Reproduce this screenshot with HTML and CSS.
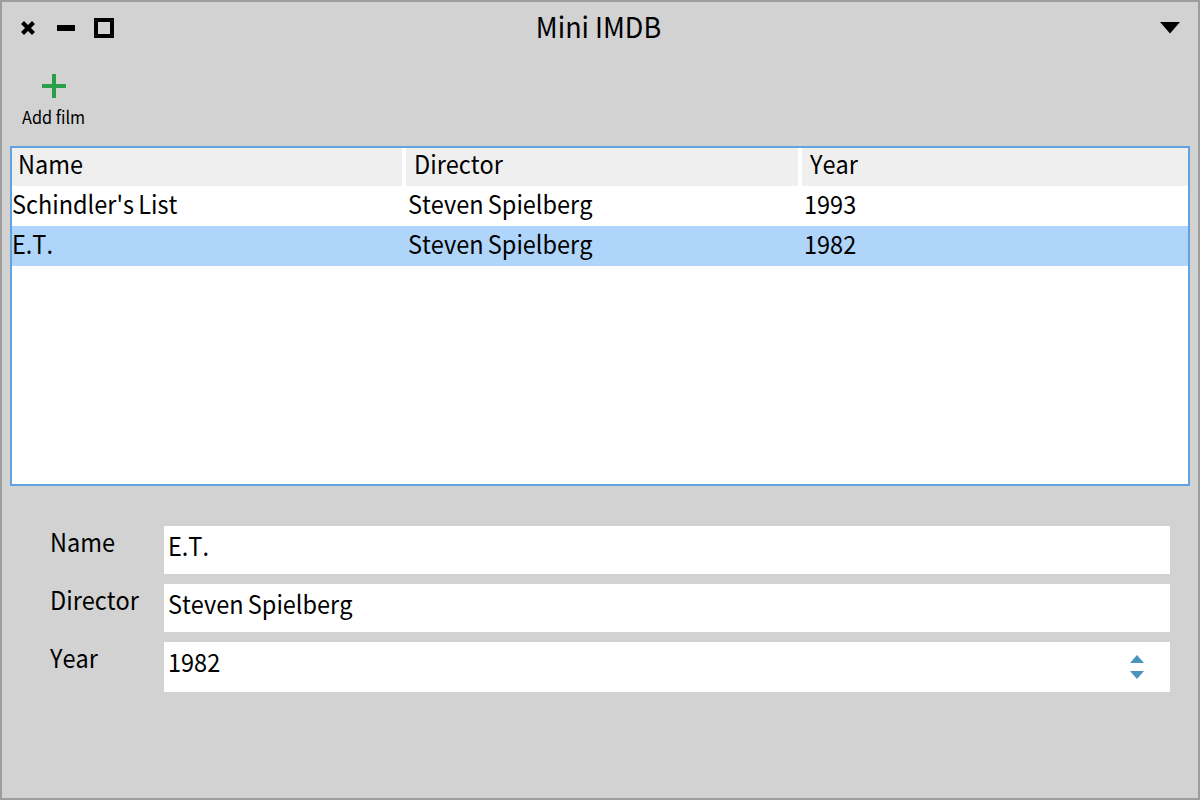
FILE: index.html
```html
<!DOCTYPE html>
<html lang="en">
<head>
<meta charset="utf-8">
<title>Mini IMDB</title>
<link rel="stylesheet" href="styles.css">
</head>
<body>
<div class="window">
  <header class="titlebar">
    <svg class="controls" width="100" height="24" viewBox="0 0 100 24">
      <path d="M4 8L12 16M12 8L4 16" stroke="#000" stroke-width="4.2" stroke-linecap="square"/>
      <rect x="37" y="9" width="18" height="6"/>
      <rect x="76" y="4" width="16" height="16" fill="none" stroke="#000" stroke-width="4"/>
    </svg>
    <h1 class="title"><span class="title-text">Mini IMDB</span></h1>
    <svg class="menu" width="20" height="12" viewBox="0 0 20 12"><path d="M0 0H20L10 11.5Z"/></svg>
  </header>
  <div class="toolbar">
    <div class="tool">
      <svg class="plus" width="24" height="24" viewBox="0 0 24 24"><path d="M10 0h4v10h10v4H14v10h-4V14H0v-4h10z" fill="#289f49"/></svg>
      <span class="tool-label">Add film</span>
    </div>
  </div>
  <main class="table">
    <div class="row head"><div class="cell"><span class="text">Name</span></div><div class="cell"><span class="text">Director</span></div><div class="cell"><span class="text">Year</span></div></div>
    <div class="row"><div class="cell"><span class="text">Schindler's List</span></div><div class="cell"><span class="text">Steven Spielberg</span></div><div class="cell"><span class="text">1993</span></div></div>
    <div class="row selected"><div class="cell"><span class="text">E.T.</span></div><div class="cell"><span class="text">Steven Spielberg</span></div><div class="cell"><span class="text">1982</span></div></div>
  </main>
  <section class="form">
    <div class="label"><span class="text">Name</span></div><div class="field"><span class="text">E.T.</span></div>
    <div class="label"><span class="text">Director</span></div><div class="field"><span class="text">Steven Spielberg</span></div>
    <div class="label"><span class="text">Year</span></div>
    <div class="field number"><span class="text">1982</span>
      <svg class="spinner" width="14" height="24" viewBox="0 0 14 24"><path d="M0 8L7 0L14 8ZM0 16H14L7 24Z" fill="#4a94be"/></svg>
    </div>
  </section>
</div>
</body>
</html>
```
FILE: styles.css
```css
* { box-sizing: border-box; }
body {
  margin: 0;
  font-family: "Noto Sans CJK SC", "Noto Sans", sans-serif;
  font-size: 25px;
  font-kerning: none;
  font-variant-ligatures: none;
  color: #000;
}
.window {
  width: 1200px;
  height: 800px;
  border: 2px solid #9d9d9d;
  background: #d2d2d2;
  display: flex;
  flex-direction: column;
}
.text {
  display: inline-block;
  white-space: nowrap;
  word-spacing: -1px;
  transform: scaleX(.94);
  transform-origin: left;
}
.titlebar {
  height: 56px;
  display: grid;
  grid-template-columns: 100px 1fr 100px;
  padding: 0 18px;
}
.controls { margin-top: 14px; }
.title {
  margin: 0;
  font-size: 29px;
  font-weight: 400;
  line-height: 47px;
  text-align: center;
}
.title-text { display: inline-block; transform: scaleX(.93); padding-right: 3px; }
.menu { justify-self: end; margin-top: 20px; }
.toolbar { height: 88px; padding: 16px 0 0 20px; }
.plus { display: block; margin-left: 20px; }
.tool-label {
  display: block;
  width: max-content;
  margin-top: 8px;
  font-size: 17.5px;
  line-height: 22px;
  white-space: nowrap;
  transform: scaleX(.93);
  transform-origin: left;
}
.table {
  margin: 0 8px;
  height: 340px;
  border: 2px solid #60a3e0;
  background: #fff;
}
.row {
  display: grid;
  grid-template-columns: 392px 392px 1fr;
  column-gap: 4px;
  height: 40px;
  line-height: 34px;
}
.row.head { grid-template-columns: 390px 392px 1fr; height: 38px; line-height: 30px; }
.head .cell { background: #efefef; padding-left: 8px; }
.head .cell:first-child { padding-left: 6px; }
.selected { background: #afd5fa; }
.form {
  margin: 40px 28px 0 48px;
  display: grid;
  grid-template-columns: 114px 1fr;
  grid-template-rows: 48px 48px 50px;
  row-gap: 10px;
}
.label { line-height: 30px; }
.field { background: #fff; line-height: 38px; padding-left: 4px; }
.number { display: flex; justify-content: space-between; padding-right: 26px; }
.spinner { margin-top: 13px; }
```
